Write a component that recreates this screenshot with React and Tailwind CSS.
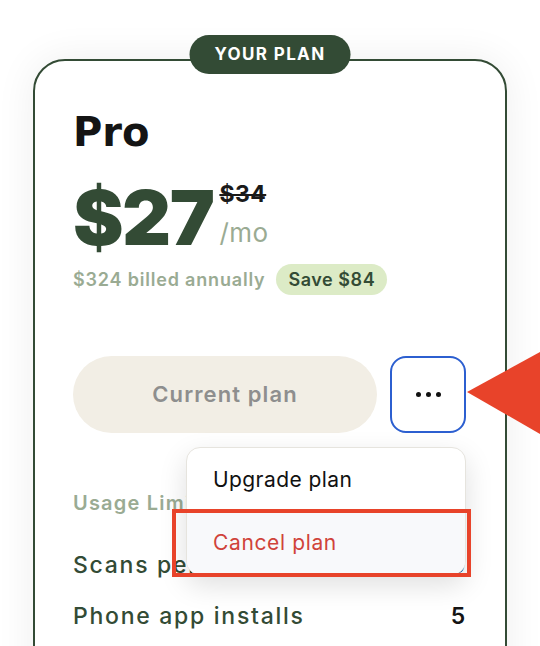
const green = "text-[#334b35]";

const usage = [
  { label: "Scans per month", value: "500" },
  { label: "Phone app installs", value: "5" },
];

const PlanMenu = () => (
  <div className="absolute left-[113px] top-[91px] w-[280px] overflow-hidden rounded-[14px] border border-[#e6e4de] bg-white shadow-[0_10px_28px_rgba(0,0,0,0.13)]">
    <button className="flex h-[63px] w-full items-center px-[26px] text-left text-[21px] tracking-[0.02em] text-[#111]">
      Upgrade plan
    </button>
    <button className="flex h-[63px] w-full items-center bg-[#f8f9fb] px-[26px] text-left text-[21px] tracking-[0.03em] text-[#d0433a]">
      Cancel plan
    </button>
  </div>
);

const App = () => {
  return (
    <div
      className="relative min-h-screen overflow-hidden bg-white pl-[33px] pt-[59px]"
      style={{ fontFamily: "Inter, 'Noto Sans', sans-serif" }}
    >
      <div className="relative w-[474px] rounded-[32px] border-2 border-[#334b35] px-[38px] pb-[160px] pt-[51px] shadow-[0_0_40px_rgba(0,0,0,0.07)]">
        {/* badge on the top edge */}
        <div className="absolute left-1/2 top-[-26px] flex h-[39px] -translate-x-1/2 items-center rounded-full bg-[#334b35] px-[25px] text-[17px] font-bold tracking-[0.08em] text-white">
          YOUR PLAN
        </div>

        <h2
          className="text-[40px] font-bold leading-none text-[#141414]"
          style={{ fontFamily: "'DejaVu Sans', Inter, sans-serif" }}
        >
          Pro
        </h2>

        <div className="mt-[27px] flex items-start">
          <span className={`text-[76px] font-black leading-none tracking-[-0.02em] ${green}`}>
            $27
          </span>
          <div className="ml-[6px] mt-1 flex flex-col">
            <span className="text-[23px] font-bold leading-none tracking-[0.02em] text-[#1a1a1a] line-through decoration-2">
              $34
            </span>
            <span className="mt-[14px] text-[26px] leading-none tracking-[0.02em] text-[#9aab93]">/mo</span>
          </div>
        </div>

        <div className="mt-[9px] flex items-center gap-[11px]">
          <span className="text-[18px] font-semibold tracking-[0.045em] text-[#9aab93]">$324 billed annually</span>
          <span className={`flex h-[31px] items-center rounded-full bg-[#dcebc6] px-[12px] text-[18px] font-semibold tracking-[0.03em] ${green}`}>
            Save $84
          </span>
        </div>

        <div className="relative mt-[61px] flex gap-[13px]">
          <button className="flex h-[77px] w-[304px] items-center justify-center rounded-full bg-[#f2eee5] text-[22px] font-semibold tracking-[0.05em] text-[#8e8e8e]">
            Current plan
          </button>
          <button className="flex h-[77px] w-[76px] items-center justify-center gap-[5px] rounded-[16px] border-2 border-[#2c5fd0] bg-white">
            <span className="h-[5px] w-[5px] rounded-full bg-[#111]" />
            <span className="h-[5px] w-[5px] rounded-full bg-[#111]" />
            <span className="h-[5px] w-[5px] rounded-full bg-[#111]" />
          </button>

          <PlanMenu />
          <div className="pointer-events-none absolute left-[99px] top-[153px] h-[68px] w-[299px] border-4 border-[#e8432a]" />
        </div>

        <p className="mt-[60px] text-[20px] font-semibold leading-none tracking-[0.06em] text-[#9aab93]">Usage Limits</p>

        <div className="mt-[41px] flex flex-col gap-[28px]">
          {usage.map((row) => (
            <div key={row.label} className="flex items-center justify-between text-[23px] leading-none tracking-[0.075em]">
              <span className={`font-medium ${green}`}>{row.label}</span>
              <span className="font-semibold text-[#141414]">{row.value}</span>
            </div>
          ))}
        </div>
      </div>

      {/* pointer arrow */}
      <svg className="absolute left-[467px] top-[342px]" width="73" height="100" viewBox="0 0 73 100">
        <polygon points="0,50 73,10 73,92" fill="#e8432a" />
      </svg>
    </div>
  );
};

export default App;
